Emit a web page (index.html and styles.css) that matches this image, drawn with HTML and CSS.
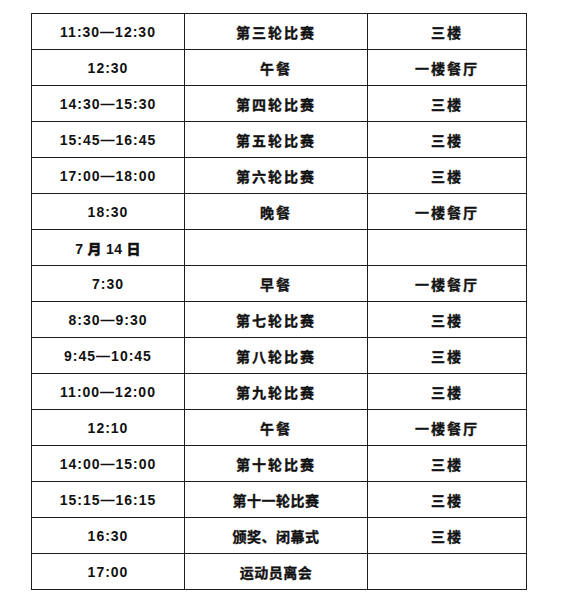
FILE: index.html
```html
<!DOCTYPE html>
<html lang="zh">
<head>
<meta charset="utf-8">
<link rel="stylesheet" href="styles.css">
</head>
<body>
<div class="page">
<table class="schedule">
<colgroup><col class="c1"><col class="c2"><col class="c3"></colgroup>
<tbody>
<tr><td class="num">11:30—12:30</td><td class="zh">第三轮比赛</td><td class="zh">三楼</td></tr>
<tr><td class="num">12:30</td><td class="zh">午餐</td><td class="zh">一楼餐厅</td></tr>
<tr><td class="num">14:30—15:30</td><td class="zh">第四轮比赛</td><td class="zh">三楼</td></tr>
<tr><td class="num">15:45—16:45</td><td class="zh">第五轮比赛</td><td class="zh">三楼</td></tr>
<tr><td class="num">17:00—18:00</td><td class="zh">第六轮比赛</td><td class="zh">三楼</td></tr>
<tr><td class="num">18:30</td><td class="zh">晚餐</td><td class="zh">一楼餐厅</td></tr>
<tr><td class="num date">7 <span class="zc">月</span> 14 <span class="zc">日</span></td><td></td><td></td></tr>
<tr><td class="num">7:30</td><td class="zh">早餐</td><td class="zh">一楼餐厅</td></tr>
<tr><td class="num">8:30—9:30</td><td class="zh">第七轮比赛</td><td class="zh">三楼</td></tr>
<tr><td class="num">9:45—10:45</td><td class="zh">第八轮比赛</td><td class="zh">三楼</td></tr>
<tr><td class="num">11:00—12:00</td><td class="zh">第九轮比赛</td><td class="zh">三楼</td></tr>
<tr><td class="num">12:10</td><td class="zh">午餐</td><td class="zh">一楼餐厅</td></tr>
<tr><td class="num">14:00—15:00</td><td class="zh">第十轮比赛</td><td class="zh">三楼</td></tr>
<tr><td class="num">15:15—16:15</td><td class="zh tight">第十一轮比赛</td><td class="zh">三楼</td></tr>
<tr><td class="num">16:30</td><td class="zh tight">颁奖、闭幕式</td><td class="zh">三楼</td></tr>
<tr><td class="num">17:00</td><td class="zh tight">运动员离会</td><td></td></tr>
</tbody>
</table>
</div>
</body>
</html>
```

FILE: styles.css
```css
html, body {
  margin: 0;
  padding: 0;
  background: #fff;
}
.page {
  padding: 13px 0 0 31px;
}
.schedule {
  border-collapse: collapse;
  table-layout: fixed;
  width: 495px;
}
.c1 { width: 153px; }
.c2 { width: 183px; }
.c3 { width: 159px; }
.schedule tr {
  height: 36px;
}
.schedule td {
  border: 1px solid #1e1e1e;
  padding: 0;
  text-align: center;
  vertical-align: middle;
  color: #111;
  font-weight: 700;
}
.num {
  font-family: "Liberation Sans", Arial, sans-serif;
  font-size: 14px;
  letter-spacing: 1px;
}
.num.date {
  letter-spacing: 0.3px;
}
.zh {
  font-family: "Noto Sans CJK SC", sans-serif;
  font-size: 14px;
  letter-spacing: 2px;
  font-weight: 900;
  -webkit-text-stroke: 0.35px #111;
}
.zh.tight {
  letter-spacing: 0.5px;
}
.zc {
  font-family: "Noto Sans CJK SC", sans-serif;
  font-weight: 900;
  -webkit-text-stroke: 0.35px #111;
}
```
